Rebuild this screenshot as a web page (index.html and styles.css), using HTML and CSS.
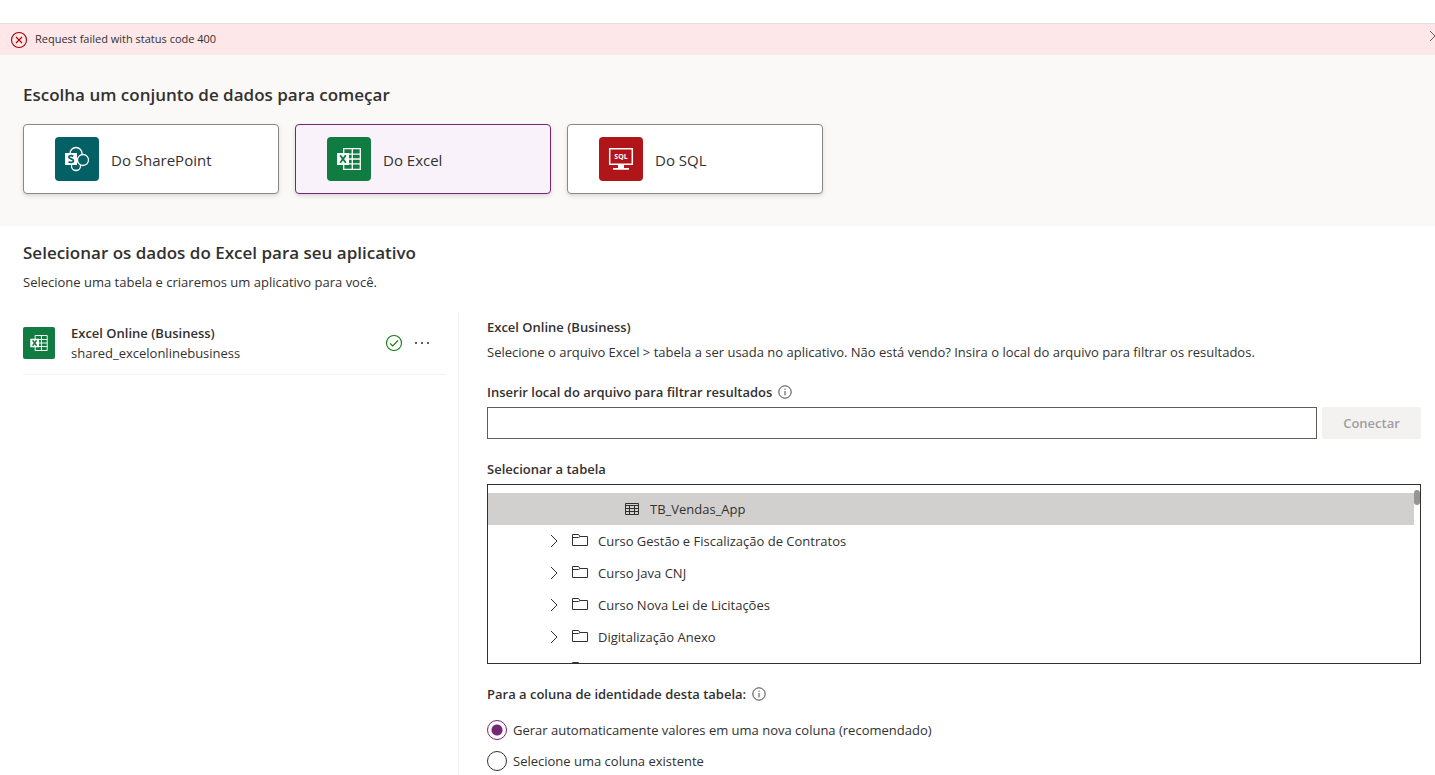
FILE: index.html
```html
<!DOCTYPE html>
<html lang="pt-BR">
<head>
<meta charset="utf-8">
<title>Conjunto de dados</title>
<link rel="stylesheet" href="styles.css">
</head>
<body>
<svg class="defs" aria-hidden="true">
  <symbol id="i-excel" viewBox="0 0 44 44">
    <path fill="none" stroke="#fff" stroke-width="1.3" d="M16.700 11.700h16.600v20.600H16.700zM16 17.200h17.500M16 22h17.500M16 26.800h17.500M25.300 12v20"/>
    <path fill="#fff" d="M10 16h12v12H10z"/>
    <path fill="none" stroke="#107c41" stroke-width="1.900" d="M13.200 18.200l5.600 7.600M18.800 18.200l-5.600 7.600"/>
  </symbol>
  <symbol id="i-info" viewBox="0 0 14 14">
    <circle cx="7" cy="7" r="6.2" fill="none" stroke="#323130" stroke-width=".9"/>
    <path stroke="#323130" stroke-width=".9" d="M7 6v4.400M7 3.600v1.200"/>
  </symbol>
  <symbol id="i-folder" viewBox="0 0 18 14">
    <path fill="none" stroke="#323130" d="M1.500 12.500v-11h6l1.500 2h7.500v9zM1.500 4.500h6l1.500-1"/>
  </symbol>
  <symbol id="i-chevron" viewBox="0 0 8 14">
    <path fill="none" stroke="#323130" d="M1 1l6 6-6 6"/>
  </symbol>
</svg>

<div class="banner" role="alert">
  <svg class="banner-icon" viewBox="0 0 18 18"><circle cx="9" cy="9" r="7.500" fill="none" stroke="#a80000" stroke-width="1.100"/><path stroke="#a80000" stroke-width="1.100" d="M6 6l6 6M12 6l-6 6"/></svg>
  <span class="banner-text">Request failed with status code 400</span>
  <button class="banner-close" type="button" aria-label="Fechar"><svg viewBox="0 0 10 10"><path stroke="#605e5c" d="M0 0l10 10M10 0L0 10"/></svg></button>
</div>

<section class="sources">
  <h2 class="title">Escolha um conjunto de dados para começar</h2>
  <div class="cards">
    <button class="card" type="button">
      <svg class="tile sharepoint" viewBox="0 0 44 44"><g fill="#036165" stroke="#fff" stroke-width="1.300"><circle cx="21" cy="29" r="4.500"/><circle cx="21" cy="16.500" r="6"/><circle cx="28" cy="23" r="5.500"/></g><path fill="#fff" d="M10 16h12v12H10z"/><path fill="none" stroke="#036165" stroke-width="1.700" d="M18.300 19.200c-1.200-.8-4.500-1-4.500.9 0 2.100 4.700 1.500 4.700 3.700 0 2-3.500 2-5 1"/></svg>
      <span>Do SharePoint</span>
    </button>
    <button class="card selected" type="button">
      <svg class="tile excel"><use href="#i-excel"/></svg>
      <span>Do Excel</span>
    </button>
    <button class="card" type="button">
      <svg class="tile sql" viewBox="0 0 44 44"><path fill="none" stroke="#fff" stroke-width="1.500" d="M10.700 11.700h22.600v15.600H10.700z"/><path fill="#fff" d="M19 28h6v3h5v1.700H14V31h5z"/><text class="sql-text" x="22" y="22" text-anchor="middle">SQL</text></svg>
      <span>Do SQL</span>
    </button>
  </div>
</section>

<main class="main">
  <h2 class="title">Selecionar os dados do Excel para seu aplicativo</h2>
  <p class="lead">Selecione uma tabela e criaremos um aplicativo para você.</p>
  <div class="columns">
    <div class="connections">
      <div class="connection">
        <svg class="tile small excel"><use href="#i-excel"/></svg>
        <div class="connection-text"><strong>Excel Online (Business)</strong><span>shared_excelonlinebusiness</span></div>
        <svg class="ok" viewBox="0 0 18 18"><circle cx="9" cy="9" r="7.500" fill="none" stroke="#107c10" stroke-width="1.100"/><path fill="none" stroke="#107c10" stroke-width="1.100" d="M5 9.300l2.700 2.700L13 6.500"/></svg>
        <button class="more" type="button" aria-label="Mais"><svg viewBox="0 0 16 4"><path fill="#605e5c" d="M1 1h2v2H1zM7 1h2v2H7zM13 1h2v2h-2z"/></svg></button>
      </div>
    </div>
    <div class="details">
      <h3 class="label">Excel Online (Business)</h3>
      <p class="help">Selecione o arquivo Excel &gt; tabela a ser usada no aplicativo. Não está vendo? Insira o local do arquivo para filtrar os resultados.</p>
      <div class="label-row"><label class="label" for="file">Inserir local do arquivo para filtrar resultados</label><svg class="info"><use href="#i-info"/></svg></div>
      <div class="connect"><input id="file" class="field" type="text"><button class="connect-button" type="button" disabled>Conectar</button></div>
      <h3 class="label tree-label">Selecionar a tabela</h3>
      <div class="tree">
        <ul class="rows">
          <li class="row table-row"><svg class="grid-icon" viewBox="0 0 14 14"><path fill="none" stroke="#323130" d="M.5 1.500h13v11H.5zM.5 3.500h13M.5 6.500h13M.5 9.500h13M4.500 3.500v9M9.500 3.500v9"/></svg><span>TB_Vendas_App</span></li>
          <li class="row"><button class="expand" type="button" aria-label="Expandir"><svg><use href="#i-chevron"/></svg></button><svg class="folder"><use href="#i-folder"/></svg><span>Curso Gestão e Fiscalização de Contratos</span></li>
          <li class="row"><button class="expand" type="button" aria-label="Expandir"><svg><use href="#i-chevron"/></svg></button><svg class="folder"><use href="#i-folder"/></svg><span>Curso Java CNJ</span></li>
          <li class="row"><button class="expand" type="button" aria-label="Expandir"><svg><use href="#i-chevron"/></svg></button><svg class="folder"><use href="#i-folder"/></svg><span>Curso Nova Lei de Licitações</span></li>
          <li class="row"><button class="expand" type="button" aria-label="Expandir"><svg><use href="#i-chevron"/></svg></button><svg class="folder"><use href="#i-folder"/></svg><span>Digitalização Anexo</span></li>
          <li class="row partial"><svg class="folder"><use href="#i-folder"/></svg></li>
        </ul>
        <div class="thumb"></div>
      </div>
      <fieldset class="identity">
        <legend class="label-row"><span class="label">Para a coluna de identidade desta tabela:</span><svg class="info"><use href="#i-info"/></svg></legend>
        <label class="option"><input type="radio" name="identity" checked>Gerar automaticamente valores em uma nova coluna (recomendado)</label>
        <label class="option"><input type="radio" name="identity">Selecione uma coluna existente</label>
      </fieldset>
    </div>
  </div>
</main>
</body>
</html>
```
FILE: styles.css
```css
* { box-sizing: border-box; }
body {
  margin: 0;
  padding-top: 23px;
  overflow: hidden;
  background: #fff;
  color: #323130;
  font: 13px/20px "Segoe UI", "Open Sans", "Noto Sans", sans-serif;
}
h2, h3, p, ul, fieldset { margin: 0; padding: 0; }
svg { display: block; flex: none; }
button, input { font: inherit; color: inherit; }
.defs { position: absolute; width: 0; height: 0; }

.banner {
  display: flex;
  align-items: center;
  gap: 7px;
  height: 32px;
  padding-left: 10px;
  overflow: hidden;
  border-top: 1px solid #e1dfdd;
  background: #fde7e9;
  font-size: 11px;
}
.banner-icon { width: 18px; height: 18px; }
.banner-text { padding-bottom: 2px; }
.banner-close { margin: 0 -5px 8px auto; padding: 0; border: 0; background: none; }
.banner-close svg { width: 10px; height: 10px; }

.title { font-size: 17px; line-height: 24px; font-weight: 600; }
.sources { padding: 28px 23px 32px; background: #faf9f8; }
.cards { display: flex; gap: 16px; margin-top: 17px; }
.card {
  display: flex;
  align-items: center;
  gap: 12px;
  width: 256px;
  height: 70px;
  padding: 0 31px;
  border: 1px solid #8a8886;
  border-radius: 4px;
  background: #fff;
  box-shadow: 0 2px 4px rgba(0, 0, 0, .13);
  font-size: 15px;
  font-weight: 500;
}
.card span { padding-top: 2px; }
.card.selected { border-color: #742774; background: #f9f2fb; }
.tile { width: 44px; height: 44px; border-radius: 4px; }
.tile.small { width: 32px; height: 32px; border-radius: 2px; }
.sharepoint { background: #036165; }
.excel { background: #107c41; }
.sql { background: #b01519; }
.sql-text { fill: #fff; font-size: 7px; font-weight: 700; }

.main { padding: 15px 14px 0 23px; }
.lead { margin-top: 7px; }
.columns { display: grid; grid-template-columns: 436px 1fr; margin-top: 20px; }
.connections { min-height: 464px; padding-right: 12px; border-right: 1px solid #f3f2f1; }
.connection {
  display: flex;
  align-items: center;
  height: 63px;
  border-bottom: 1px solid #f3f2f1;
}
.connection-text { display: grid; flex: 1; margin-left: 16px; }
.connection strong, .label { font-weight: 600; font-size: 13px; line-height: 20px; }
.ok { width: 18px; height: 18px; }
.more { margin: 0 16px 0 11px; padding: 0; border: 0; background: none; }
.more svg { width: 16px; height: 4px; }

.details { min-width: 0; padding: 5px 0 0 28px; }
.help { margin-top: 5px; }
.label-row { display: flex; align-items: center; gap: 6px; padding: 0; }
.help + .label-row { margin-top: 20px; }
.info { width: 14px; height: 14px; }
.connect { display: flex; gap: 5px; margin-top: 5px; }
.field { flex: 1; min-width: 0; height: 32px; padding: 0 8px; border: 1px solid #605e5c; background: #fff; }
.connect-button { width: 99px; height: 32px; padding: 0; border: 0; border-radius: 2px; background: #f3f2f1; color: #a19f9d; font-weight: 600; }
.tree-label { margin-top: 20px; }
.tree { position: relative; height: 180px; margin-top: 5px; padding: 8px 6px 0 0; overflow: hidden; border: 1px solid #323130; }
.rows { list-style: none; }
.row { display: flex; align-items: center; height: 32px; padding-left: 62px; }
.row span { margin-left: 9px; }
.table-row { padding-left: 137px; background: #d2d0ce; }
.table-row span { margin-left: 11px; }
.grid-icon { width: 14px; height: 14px; }
.expand { width: 8px; margin-right: 13px; padding: 0; border: 0; background: none; }
.expand svg { width: 8px; height: 14px; }
.folder { width: 18px; height: 14px; margin-bottom: 2px; }
.partial { padding-left: 83px; }
.thumb { position: absolute; top: 5px; right: 0; width: 6px; height: 15px; border-radius: 3px; background: #979593; }
.identity { margin-top: 20px; border: 0; }
.option { display: flex; align-items: center; gap: 6px; height: 31px; }
.identity legend + .option { margin-top: 10px; }
.option input {
  appearance: none;
  width: 20px;
  height: 20px;
  margin: 0;
  border: 1px solid #323130;
  border-radius: 50%;
}
.option input:checked { border-color: #742774; background: radial-gradient(circle, #742774 5px, transparent 6px); }
```
